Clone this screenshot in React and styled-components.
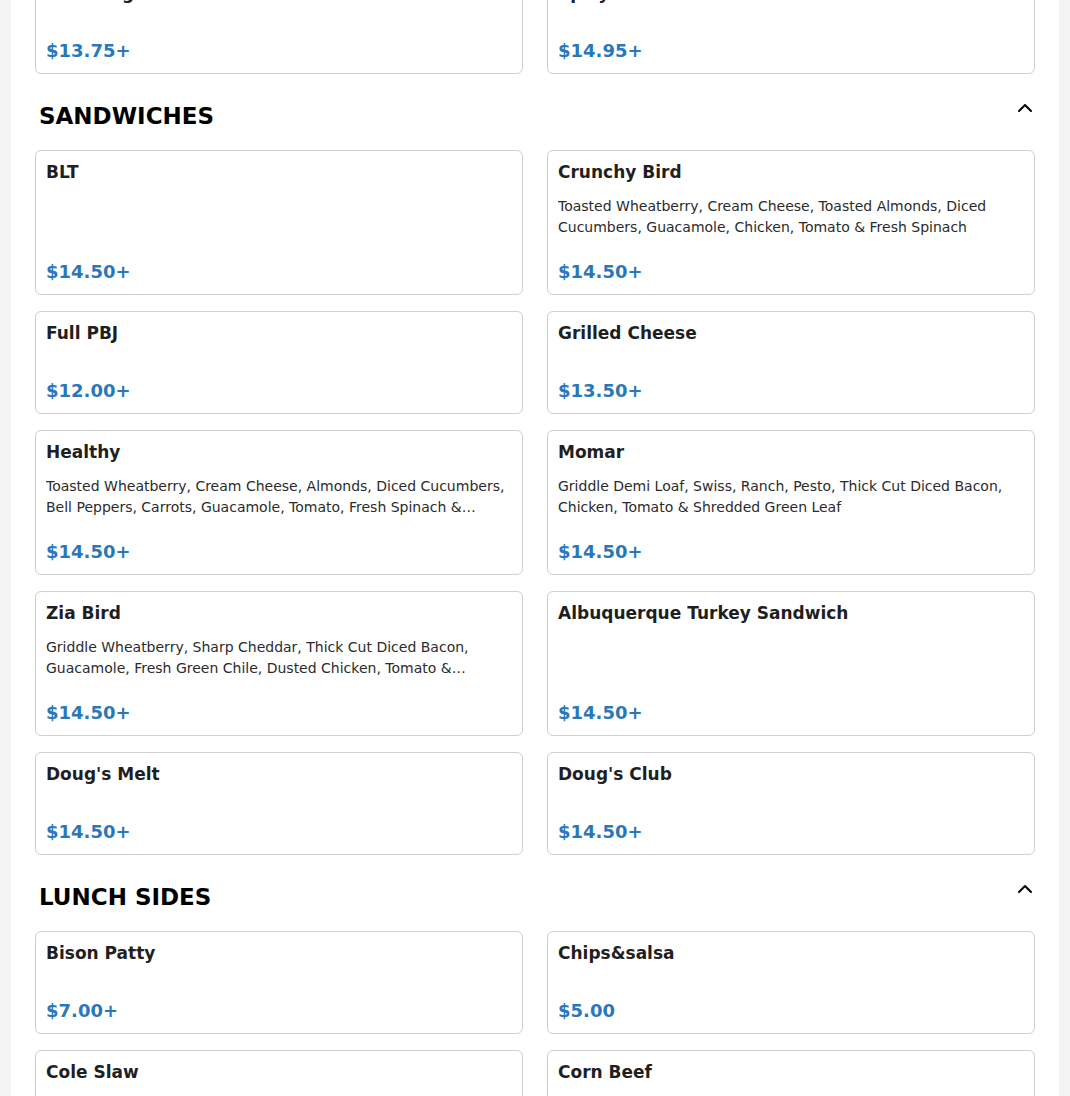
import React from 'react';
import styled, { createGlobalStyle } from 'styled-components';
import { ChevronUp } from 'lucide-react';

const menu = [
  {
    title: 'Breakfast Burgers',
    items: [
      { name: 'Hamburger', price: '$13.75+' },
      { name: 'Spicy Chicken', price: '$14.95+' },
    ],
  },
  {
    title: 'Sandwiches',
    items: [
      { name: 'BLT', price: '$14.50+' },
      {
        name: 'Crunchy Bird',
        desc: 'Toasted Wheatberry, Cream Cheese, Toasted Almonds, Diced Cucumbers, Guacamole, Chicken, Tomato & Fresh Spinach',
        price: '$14.50+',
      },
      { name: 'Full PBJ', price: '$12.00+' },
      { name: 'Grilled Cheese', price: '$13.50+' },
      {
        name: 'Healthy',
        desc: 'Toasted Wheatberry, Cream Cheese, Almonds, Diced Cucumbers, Bell Peppers, Carrots, Guacamole, Tomato, Fresh Spinach & Sprouts',
        price: '$14.50+',
      },
      {
        name: 'Momar',
        desc: 'Griddle Demi Loaf, Swiss, Ranch, Pesto, Thick Cut Diced Bacon, Chicken, Tomato & Shredded Green Leaf',
        price: '$14.50+',
      },
      {
        name: 'Zia Bird',
        desc: 'Griddle Wheatberry, Sharp Cheddar, Thick Cut Diced Bacon, Guacamole, Fresh Green Chile, Dusted Chicken, Tomato & Shredded Green Leaf',
        price: '$14.50+',
      },
      { name: 'Albuquerque Turkey Sandwich', price: '$14.50+' },
      { name: "Doug's Melt", price: '$14.50+' },
      { name: "Doug's Club", price: '$14.50+' },
    ],
  },
  {
    title: 'Lunch Sides',
    items: [
      { name: 'Bison Patty', price: '$7.00+' },
      { name: 'Chips&salsa', price: '$5.00' },
      { name: 'Cole Slaw', price: '$4.00' },
      { name: 'Corn Beef', price: '$6.00+' },
    ],
  },
];

export default function App() {
  return (
    <>
      <GlobalStyle />
      <Page>
        {menu.map((section) => (
          <Section key={section.title}>
            <Header>
              <Title>{section.title}</Title>
              <Toggle aria-label="Collapse section">
                <ChevronUp size={24} strokeWidth={2} />
              </Toggle>
            </Header>
            <Grid>
              {section.items.map((item) => (
                <Card key={item.name}>
                  <Name>{item.name}</Name>
                  <Desc>{item.desc}</Desc>
                  <Price>{item.price}</Price>
                </Card>
              ))}
            </Grid>
          </Section>
        ))}
      </Page>
    </>
  );
}

const GlobalStyle = createGlobalStyle`
  body {
    margin: 0;
    background: #f3f3f3;
    font-family: "DejaVu Sans", "Liberation Sans", sans-serif;
    overflow: hidden;
  }
`;

// page is shown scrolled down: the first section sits above the viewport
const Page = styled.main`
  max-width: 1000px;
  margin: -105px auto 0;
  padding: 0 24px 40px;
  background: #fff;
`;

const Section = styled.section`
  padding-top: 25px;
`;

const Header = styled.div`
  display: flex;
  justify-content: space-between;
  align-items: flex-start;
  height: 32px;
  margin-bottom: 19px;
  padding-left: 4px;
`;

const Title = styled.h2`
  margin: 0;
  padding-top: 1px;
  font-size: 23px;
  line-height: 32px;
  font-weight: 700;
  text-transform: uppercase;
  color: #000;
`;

const Toggle = styled.button`
  display: flex;
  align-items: center;
  justify-content: center;
  width: 24px;
  height: 18px;
  margin-right: -2px;
  padding: 0;
  border: none;
  background: none;
  color: #000;
  cursor: pointer;
`;

const Grid = styled.div`
  display: grid;
  grid-template-columns: 1fr 1fr;
  column-gap: 24px;
  row-gap: 16px;
`;

const Card = styled.div`
  display: flex;
  flex-direction: column;
  padding: 10px;
  background: #fff;
  border: 1px solid #cfcfcf;
  border-radius: 6px;
`;

const Name = styled.h3`
  margin: 0;
  font-size: 17px;
  line-height: 22px;
  font-weight: 700;
  color: #1f1f1f;
`;

const Desc = styled.p`
  margin: 13px 0 0;
  font-size: 14px;
  line-height: 21px;
  color: #2b2b2b;
  display: -webkit-box;
  -webkit-line-clamp: 2;
  -webkit-box-orient: vertical;
  overflow: hidden;
`;

const Price = styled.div`
  margin-top: auto;
  padding-top: 21px;
  font-size: 18px;
  line-height: 25px;
  font-weight: 700;
  color: #2b78b8;
`;
